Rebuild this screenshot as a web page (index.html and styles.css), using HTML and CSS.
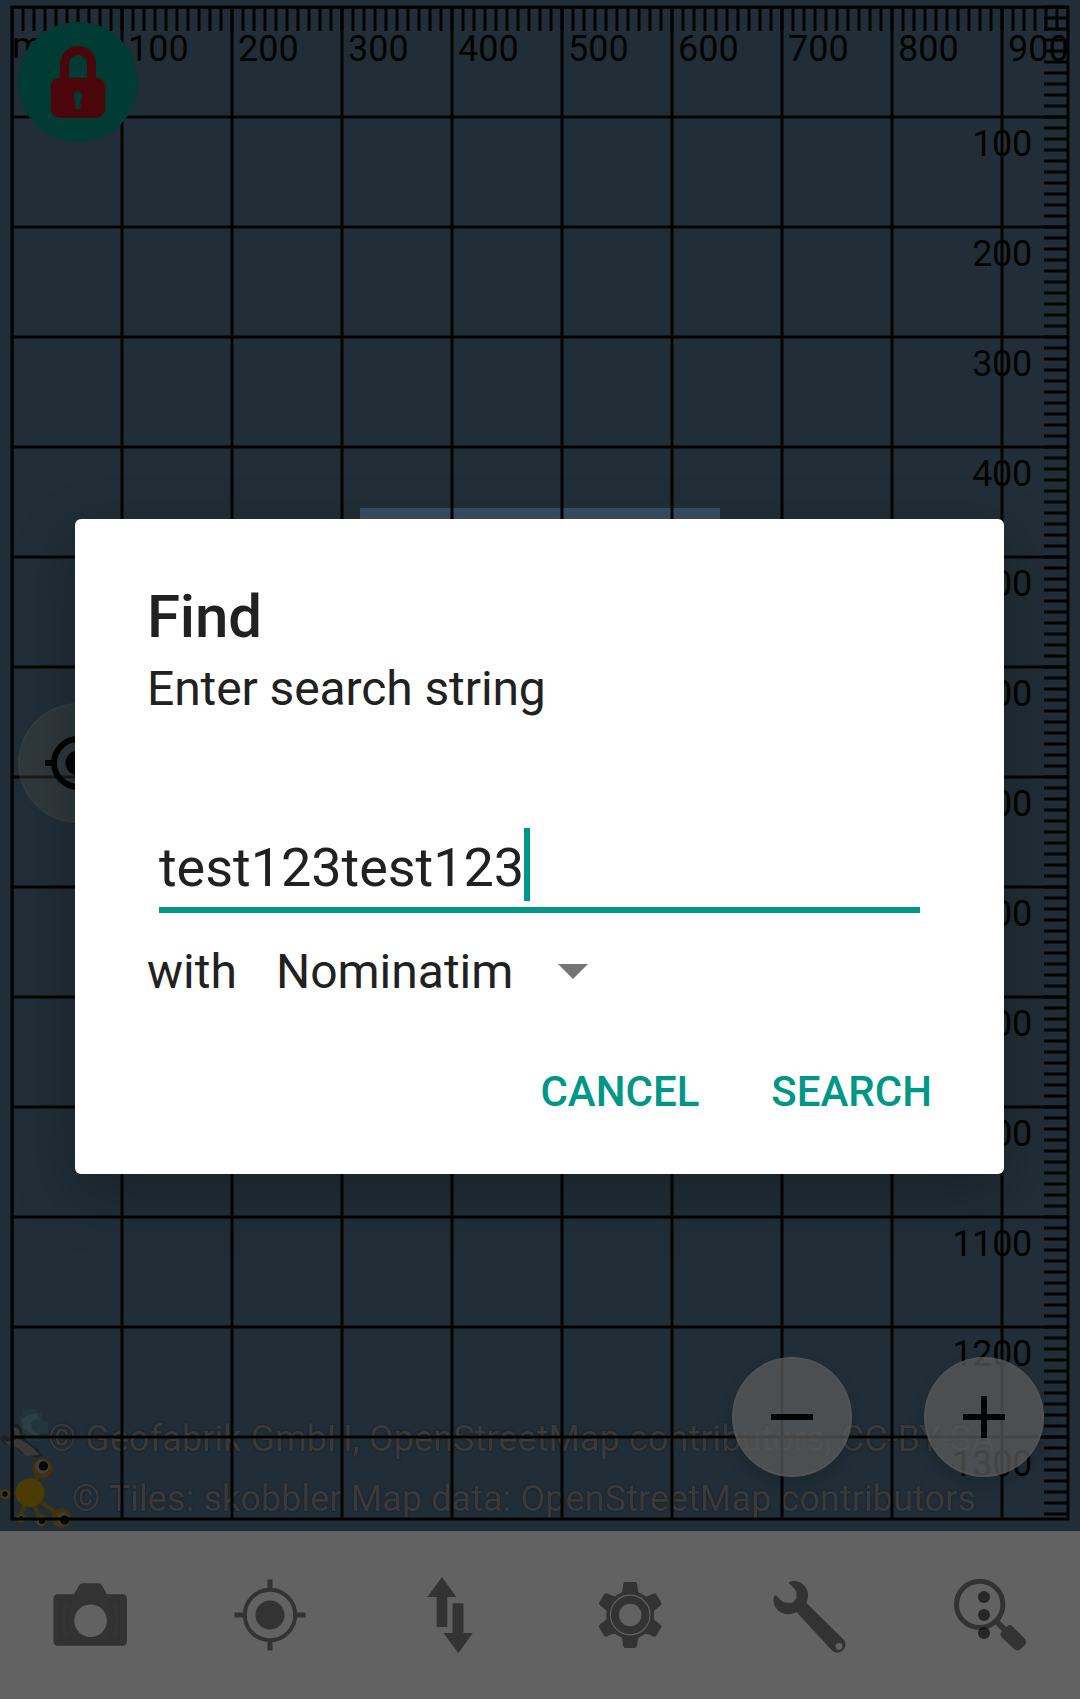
FILE: index.html
```html
<!DOCTYPE html>
<html lang="en">
<head>
<meta charset="utf-8">
<title>Find</title>
<link rel="stylesheet" href="styles.css">
</head>
<body>
<div class="app">
  <main class="map">
    <svg class="map-canvas" width="1080" height="1531" viewBox="0 0 1080 1531">
      <defs>
        <pattern id="grid" x="12" y="7" width="110" height="110" patternUnits="userSpaceOnUse">
          <path class="grid-line" d="M0 0H110M0 110H110M0 0V110M110 0V110"/>
        </pattern>
      </defs>
      <rect class="tile" x="360" y="508" width="360" height="360"/>
      <g class="geofabrik">
        <path fill="#22363b" d="M23 1409h13v4h6v8h6v12h-8v8h-14v-9h-6v-16h3z"/>
        <path fill="#2f3f43" d="M22 1419l8-5h7l4 6-5-1-5 3 1 8 6 4-3 2-12-8z"/>
        <path fill="#1c2125" d="M10 1424h8l4 5v6l7 8 9 6 5 7-7 1-14-3-7-7-11-3-4-6 4-3 8 4 4-5-6-7z"/>
        <path fill="#39393c" d="M13 1427l5 2 3 7-5 1zM3 1439l4 3 10-3 5 1 10 7 8 8-14 1-8-8-10-3z"/>
      </g>
      <g class="skobbler">
        <path class="limb" d="M30 1493L42 1467M28 1493L5 1494M27 1495L21 1517M30 1495L41 1521M32 1495L61 1517"/>
        <circle fill="#453207" cx="42.500" cy="1468" r="10"/>
        <circle fill="#4b3b04" cx="30" cy="1492.500" r="14.500"/>
        <circle fill="#453207" cx="5" cy="1494" r="5.500"/>
        <circle fill="#453207" cx="21" cy="1518" r="5"/>
        <circle fill="#453207" cx="41" cy="1520" r="6.500"/>
        <circle fill="#453207" cx="61.500" cy="1518" r="10"/>
        <g fill="#3f3f3f"><circle cx="42.500" cy="1466.500" r="7"/><circle cx="5" cy="1494" r="3.800"/><circle cx="21" cy="1518" r="3"/><circle cx="41" cy="1521" r="4.500"/><circle cx="63" cy="1519" r="6.500"/></g>
        <g fill="#060708"><circle cx="43.500" cy="1466" r="4.700"/><circle cx="5" cy="1494" r="2.700"/><circle cx="21" cy="1518" r="2"/><circle cx="42" cy="1521" r="3"/><circle cx="64.500" cy="1520" r="4.500"/></g>
      </g>
      <g class="credits">
        <text x="48" y="1451" textLength="947">© Geofabrik GmbH, OpenStreetMap contributors, CC-BY-SA</text>
        <text x="72" y="1511" textLength="904">© Tiles: skobbler Map data: OpenStreetMap contributors</text>
      </g>
      <rect fill="url(#grid)" x="12" y="7" width="1056" height="1512"/>
      <rect class="grid-line" x="12" y="7" width="1056" height="1512"/>
      <path class="ticks" d="M10.500 19H1068M1056 5.500V1519"/>
      <g class="scale">
        <text x="12" y="58">m</text>
        <text x="128" y="61">100</text><text x="238" y="61">200</text><text x="348" y="61">300</text>
        <text x="458" y="61">400</text><text x="568" y="61">500</text><text x="678" y="61">600</text>
        <text x="788" y="61">700</text><text x="898" y="61">800</text><text x="1008" y="61">900</text>
      </g>
      <g class="scale scale-right">
        <text x="1032" y="156">100</text><text x="1032" y="266">200</text><text x="1032" y="376">300</text>
        <text x="1032" y="486">400</text><text x="1032" y="596">500</text><text x="1032" y="706">600</text>
        <text x="1032" y="816">700</text><text x="1032" y="926">800</text><text x="1032" y="1036">900</text>
        <text x="1032" y="1146">1000</text><text x="1032" y="1256">1100</text><text x="1032" y="1366">1200</text>
        <text x="1032" y="1476">1300</text>
      </g>
    </svg>
    <div class="fab fab-lock">
      <svg width="120" height="120" viewBox="0 0 120 120">
        <path class="shackle" d="M46.500 58V42a13.500 13.500 0 0 1 27 0V58"/>
        <rect fill="#4a060b" x="32.700" y="55.700" width="54.600" height="40" rx="9"/>
        <circle fill="#043a34" cx="60" cy="74" r="4.500"/>
        <rect fill="#043a34" x="57.500" y="74" width="5" height="13.500" rx="2"/>
      </svg>
    </div>
    <div class="fab fab-gps">
      <svg width="120" height="120" viewBox="0 0 120 120">
        <circle class="ring" cx="60" cy="60" r="24"/>
        <circle fill="#020303" cx="60" cy="60" r="12.500"/>
        <path class="ring" d="M27 60h9M84 60h9M60 27v9M60 84v9"/>
      </svg>
    </div>
    <div class="fab fab-zoom fab-minus">
      <svg width="120" height="120" viewBox="0 0 120 120"><path class="ring" d="M39 60h42"/></svg>
    </div>
    <div class="fab fab-zoom fab-plus">
      <svg width="120" height="120" viewBox="0 0 120 120"><path class="ring" d="M39 60h42M60 39v42"/></svg>
    </div>
  </main>

  <nav class="toolbar">
    <svg viewBox="0 0 180 168">
      <path fill-rule="evenodd" d="M58 63.300H74L79 54.500Q80.200 52.300 83 52.300H98Q100.800 52.300 102 54.500L107 63.300H122.500Q127 63.300 127 68V110Q127 114.700 122.500 114.700H58Q53.400 114.700 53.400 110V68Q53.400 63.300 58 63.300ZM90.600 73.400a16.300 16.300 0 1 0 .01 0Z"/>
      <path class="engrave" d="M72 70.500H60.500V107.500H72M108 70.500H119.500V107.500H108M72 70Q62 89 72 108M109 70Q119 89 109 108"/>
    </svg>
    <svg viewBox="0 0 180 168">
      <circle class="outline" cx="90" cy="84" r="25.200" stroke-width="4"/>
      <circle cx="90" cy="84" r="14.500"/>
      <path class="outline" stroke-width="5" d="M54.500 84H63M117 84H125.500M90 48.500V57M90 111V119.500"/>
    </svg>
    <svg viewBox="0 0 180 168">
      <path d="M82 46L96.300 66H87.300V96H76.600V66H67.300ZM92.500 72.300H103.500V102H112.800L98.300 122.300L83.500 102H92.500Z"/>
    </svg>
    <svg viewBox="0 0 180 168">
      <g>
        <path id="tooth" d="M81 64Q82.500 61 83.200 54Q83.500 51 85 51H95.500Q97 51 97.300 54Q98 61 99.500 64L103 70H77.500Z"/>
        <use href="#tooth" transform="rotate(60 90.200 84)"/>
        <use href="#tooth" transform="rotate(120 90.200 84)"/>
        <use href="#tooth" transform="rotate(180 90.200 84)"/>
        <use href="#tooth" transform="rotate(240 90.200 84)"/>
        <use href="#tooth" transform="rotate(300 90.200 84)"/>
      </g>
      <circle cx="90.200" cy="84" r="24"/>
      <circle class="gap" cx="90.200" cy="84" r="19.800"/>
      <circle class="hole" cx="90.200" cy="84" r="11.200"/>
    </svg>
    <svg viewBox="0 0 180 168">
      <path d="M68.600 52.300Q70 49.500 75 50C83 50.500 89 58 88 66L86.500 72L124.500 109.500A8.200 8.200 0 0 1 112.500 120L76.500 81C64 88 52 78 53.600 67Q54 64.500 56 64.300L60 68.500Q63 71.700 66 71.700H72.400L76.500 67.500V62Q76 58 68.600 52.300Z"/>
      <circle class="hole" cx="119" cy="115.300" r="3.400"/>
    </svg>
    <svg viewBox="0 0 180 168">
      <circle class="outline" cx="79.700" cy="73.400" r="23.200" stroke-width="5"/>
      <path class="outline" stroke-width="6" d="M96 90L106 100"/>
      <path d="M101 101.500L107.500 95Q110 93 112.500 95.500L125 108Q127 111 125 114L120 118.500Q117 120.500 114 118L101.500 106Q99.500 104 101 101.500Z"/>
      <g class="overflow"><circle cx="84" cy="66" r="6"/><circle cx="84" cy="84" r="6"/><circle cx="84" cy="102" r="6"/></g>
    </svg>
  </nav>

  <section class="dialog" role="dialog">
    <h1 class="dialog-title">Find</h1>
    <p class="dialog-message">Enter search string</p>
    <div class="field"><span class="field-text">test123test123</span><span class="caret"></span></div>
    <div class="provider">
      <span>with</span>
      <span class="provider-name">Nominatim</span>
      <svg class="arrow" width="30" height="15" viewBox="0 0 30 15"><path d="M0 0H30L15 15Z"/></svg>
    </div>
    <div class="actions"><span>CANCEL</span><span>SEARCH</span></div>
  </section>
</div>
</body>
</html>
```
FILE: styles.css
```css
* { box-sizing: border-box; }

body {
  margin: 0;
  font-family: Roboto, sans-serif;
  color: #212121;
}

.app {
  position: relative;
  width: 1080px;
  height: 1699px;
  overflow: hidden;
  display: flex;
  flex-direction: column;
}

.map {
  position: relative;
  height: 1531px;
  background: #212e37;
}

.map-canvas { display: block; }
.tile { fill: #384f62; }
.grid-line { fill: none; stroke: #020303; stroke-width: 3; }
.ticks { fill: none; stroke: #020303; stroke-width: 24; stroke-dasharray: 3 8; }
.limb { fill: none; stroke: #453207; stroke-width: 4; }

.scale { font-size: 36px; fill: #020303; }
.scale-right { text-anchor: end; letter-spacing: -0.3px; }
.credits {
  font-size: 36px;
  fill: #3a3a3b;
  filter: drop-shadow(0 0 1px #171b1e);
}

.fab {
  position: absolute;
  width: 120px;
  height: 120px;
  border-radius: 50%;
}
.fab svg { display: block; }
.fab-lock { left: 18px; top: 22px; background: #003b34; }
.fab-gps {
  left: 18px;
  top: 703px;
  background: rgba(78, 78, 72, 0.32);
  box-shadow: inset 0 0 0 2px rgba(90, 90, 80, 0.12);
}
.fab-zoom {
  top: 1357px;
  background: rgba(90, 90, 90, 0.76);
  box-shadow: inset 0 0 0 2px rgba(110, 110, 110, 0.16), 0 8px 16px rgba(0, 0, 0, 0.16);
}
.fab-minus { left: 732px; }
.fab-plus { left: 924px; }
.ring { fill: none; stroke: #020303; stroke-width: 6; }
.shackle { fill: none; stroke: #4a060b; stroke-width: 9; }

.toolbar {
  height: 168px;
  display: grid;
  grid-template-columns: repeat(6, 180px);
  background: #626262;
  fill: #333;
}
.toolbar svg { display: block; width: 180px; height: 168px; }
.outline { fill: none; stroke: #333; }
.engrave { fill: none; stroke: #2f2f2f; stroke-width: 1; }
.gap { fill: none; stroke: #606060; stroke-width: 1.2; }
.hole { fill: #626262; }
.overflow { fill: rgba(0, 0, 0, 0.6); }

.dialog {
  position: absolute;
  left: 75px;
  top: 519px;
  width: 929px;
  height: 655px;
  padding: 63px 72px 0;
  background: #fff;
  border-radius: 6px;
  box-shadow: 0 20px 60px rgba(0, 0, 0, 0.28);
}
.dialog-title {
  margin: 0;
  font-size: 60px;
  font-weight: 500;
  line-height: 70px;
  letter-spacing: -0.2px;
}
.dialog-message {
  margin: 9px 0 0;
  font-size: 48px;
  line-height: 56px;
  letter-spacing: -0.1px;
}
.field {
  display: flex;
  align-items: flex-start;
  margin: 111px 12px 0;
  width: 761px;
  height: 85px;
  border-bottom: 6px solid #009688;
}
.field-text {
  font-size: 54px;
  line-height: 79px;
  letter-spacing: -0.05px;
}
.caret { width: 6px; height: 73px; background: #009688; }
.provider {
  display: flex;
  align-items: center;
  height: 56px;
  margin-top: 30px;
  font-size: 48px;
}
.provider-name { margin-left: 39px; }
.arrow { margin-left: 45px; fill: #757575; }
.actions {
  display: flex;
  justify-content: flex-end;
  gap: 72px;
  margin-top: 68px;
  font-size: 42px;
  font-weight: 500;
  line-height: 50px;
  color: #009688;
}
```
